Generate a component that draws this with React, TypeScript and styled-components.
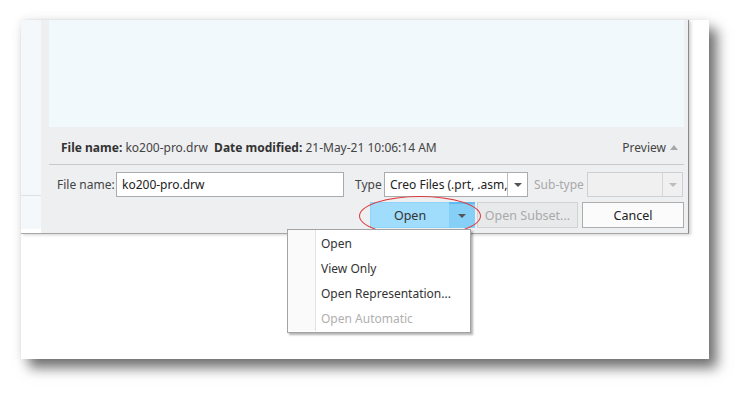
import React from 'react';
import styled, { createGlobalStyle } from 'styled-components';

const GlobalStyle = createGlobalStyle`
  html, body {
    margin: 0;
    padding: 0;
    background: #fff;
  }
  body {
    font-family: "Noto Sans", "Liberation Sans", sans-serif;
    font-size: 12px;
    color: #333;
  }
`;

const Page = styled.div`
  width: 751px;
  height: 402px;
  box-sizing: border-box;
  padding: 20px 0 0 21px;
  overflow: hidden;
`;

const Card = styled.div`
  position: relative;
  width: 688px;
  height: 339px;
  background: #fff;
  box-shadow: 8px 9px 12px rgba(0, 0, 0, 0.55), 0 0 10px rgba(0, 0, 0, 0.08);
`;

const Dialog = styled.div`
  display: flex;
  width: 668px;
  height: 214px;
  box-sizing: border-box;
  border-right: 1px solid #8a8a8a;
  border-bottom: 1px solid #a6a6a6;
  box-shadow: 2px 1px 3px rgba(0, 0, 0, 0.18);
`;

const NavPane = styled.div`
  width: 20px;
  height: 209px;
  background: #f4f8fa;
  flex-shrink: 0;
`;

const NavTop = styled.div`
  height: 175px;
  border-bottom: 1px solid #dde1e4;
`;

const Main = styled.div`
  flex: 1;
  min-width: 0;
  overflow: hidden;
  display: flex;
  flex-direction: column;
  background: #eeeff1;
  padding: 0 4px 0 8px;
`;

const Preview = styled.div`
  height: 107px;
  background: #f2f9fc;
`;

const InfoRow = styled.div`
  height: 37px;
  box-sizing: border-box;
  padding: 4px 6px 0 12px;
  display: flex;
  align-items: center;
  justify-content: space-between;
  white-space: nowrap;
`;

const Info = styled.span`
  color: #444;
  b {
    font-weight: 700;
    color: #333;
  }
`;

const PreviewToggle = styled.span`
  color: #444;
  display: flex;
  align-items: center;
  gap: 4px;
`;

const UpTri = styled.span`
  width: 0;
  height: 0;
  border-left: 4px solid transparent;
  border-right: 4px solid transparent;
  border-bottom: 5px solid #a8a8a8;
`;

const Separator = styled.div`
  height: 1px;
  background: #c9c9c9;
`;

const FieldRow = styled.div`
  margin-top: 7px;
  height: 25px;
  display: flex;
  align-items: center;
  padding-left: 8px;
  white-space: nowrap;
`;

const Label = styled.span<{ $disabled?: boolean; $w: number; $pl: number }>`
  flex-shrink: 0;
  box-sizing: border-box;
  width: ${(p) => p.$w}px;
  padding-left: ${(p) => p.$pl}px;
  color: ${(p) => (p.$disabled ? '#a9a9a9' : '#444')};
  overflow: hidden;
`;

const TextBox = styled.div`
  flex-shrink: 0;
  width: 228px;
  height: 25px;
  box-sizing: border-box;
  border: 1px solid #ababab;
  background: #fff;
  padding: 0 5px;
  display: flex;
  align-items: center;
  color: #222;
`;

const Select = styled.div<{ $w: number; $disabled?: boolean }>`
  flex-shrink: 0;
  width: ${(p) => p.$w}px;
  height: 25px;
  box-sizing: border-box;
  border: 1px solid ${(p) => (p.$disabled ? '#cfcfcf' : '#ababab')};
  background: ${(p) => (p.$disabled ? '#f0f0f0' : '#fff')};
  display: flex;
`;

const SelectValue = styled.div`
  flex: 1;
  min-width: 0;
  overflow: hidden;
  padding: 0 5px;
  display: flex;
  align-items: center;
  color: #222;
`;

const SelectArrow = styled.div<{ $disabled?: boolean }>`
  width: 19px;
  flex-shrink: 0;
  border-left: 1px solid ${(p) => (p.$disabled ? '#d6d6d6' : '#bdbdbd')};
  display: flex;
  align-items: center;
  justify-content: center;
`;

const DownTri = styled.span<{ $color: string }>`
  width: 0;
  height: 0;
  border-left: 4px solid transparent;
  border-right: 4px solid transparent;
  border-top: 4px solid ${(p) => p.$color};
`;

const ButtonRow = styled.div`
  margin-top: 5px;
  height: 26px;
  display: flex;
  justify-content: flex-end;
  align-items: stretch;
`;

const SplitWrap = styled.div`
  position: relative;
  display: flex;
  width: 105px;
  margin-right: 2px;
`;

const SplitMain = styled.div`
  flex: 1;
  background: #a0dcfb;
  border: 1px solid #8fd3f8;
  border-right: none;
  display: flex;
  align-items: center;
  justify-content: center;
  color: #333;
  font-size: 12.5px;
`;

const SplitArrow = styled.div`
  width: 26px;
  background: #86d0f8;
  border-top: 2px solid #5fbcf0;
  display: flex;
  align-items: center;
  justify-content: center;
`;

const Ring = styled.div`
  position: absolute;
  left: -11px;
  top: -6px;
  width: 120px;
  height: 38px;
  border: 1px solid #e0383a;
  border-radius: 50%;
  pointer-events: none;
`;

const Button = styled.div<{ $disabled?: boolean; $w: number; $mr?: number }>`
  width: ${(p) => p.$w}px;
  box-sizing: border-box;
  margin-right: ${(p) => p.$mr ?? 0}px;
  border: 1px solid ${(p) => (p.$disabled ? '#d2d2d2' : '#adadad')};
  background: ${(p) => (p.$disabled ? '#e8e9ea' : '#fbfbfb')};
  color: ${(p) => (p.$disabled ? '#aaa' : '#222')};
  display: flex;
  align-items: center;
  justify-content: center;
  font-size: 12.5px;
`;

const Menu = styled.div`
  position: absolute;
  left: 266px;
  top: 209px;
  width: 184px;
  box-sizing: border-box;
  background: #fff;
  border: 1px solid #a3a3a3;
  box-shadow: 2px 2px 2px rgba(0, 0, 0, 0.3);
  padding: 0 0 1px 0;
  display: flex;
`;

const Gutter = styled.div`
  width: 27px;
  background: #fafafa;
  border-right: 1px solid #e2e2e2;
`;

const MenuList = styled.div`
  flex: 1;
  display: flex;
  flex-direction: column;
  padding-top: 1px;
`;

const MenuItem = styled.div<{ $disabled?: boolean }>`
  height: 25px;
  display: flex;
  align-items: center;
  padding-left: 5px;
  color: ${(p) => (p.$disabled ? '#b0b0b0' : '#333')};
  white-space: nowrap;
`;

const menuItems = [
  { label: 'Open' },
  { label: 'View Only' },
  { label: 'Open Representation...' },
  { label: 'Open Automatic', disabled: true },
];

export default function App() {
  return (
    <>
      <GlobalStyle />
      <Page>
        <Card>
          <Dialog>
            <NavPane>
              <NavTop />
            </NavPane>
            <Main>
              <Preview />
              <InfoRow>
                <Info>
                  <b>File name:</b> ko200-pro.drw&nbsp; <b>Date modified:</b> 21-May-21 10:06:14 AM
                </Info>
                <PreviewToggle>
                  Preview <UpTri />
                </PreviewToggle>
              </InfoRow>
              <Separator />
              <FieldRow>
                <Label $w={59} $pl={0}>File name:</Label>
                <TextBox>ko200-pro.drw</TextBox>
                <Label $w={40} $pl={11}>Type</Label>
                <Select $w={144}>
                  <SelectValue>Creo Files (.prt, .asm,</SelectValue>
                  <SelectArrow>
                    <DownTri $color="#555" />
                  </SelectArrow>
                </Select>
                <Label $disabled $w={59} $pl={6}>Sub-type</Label>
                <Select $w={96} $disabled>
                  <SelectValue />
                  <SelectArrow $disabled>
                    <DownTri $color="#bdbdbd" />
                  </SelectArrow>
                </Select>
              </FieldRow>
              <ButtonRow>
                <SplitWrap>
                  <SplitMain>Open</SplitMain>
                  <SplitArrow>
                    <DownTri $color="#555" />
                  </SplitArrow>
                  <Ring />
                </SplitWrap>
                <Button $disabled $w={101} $mr={4}>
                  Open Subset...
                </Button>
                <Button $w={102}>Cancel</Button>
              </ButtonRow>
            </Main>
          </Dialog>
          <Menu>
            <Gutter />
            <MenuList>
              {menuItems.map((m) => (
                <MenuItem key={m.label} $disabled={m.disabled}>
                  {m.label}
                </MenuItem>
              ))}
            </MenuList>
          </Menu>
        </Card>
      </Page>
    </>
  );
}
